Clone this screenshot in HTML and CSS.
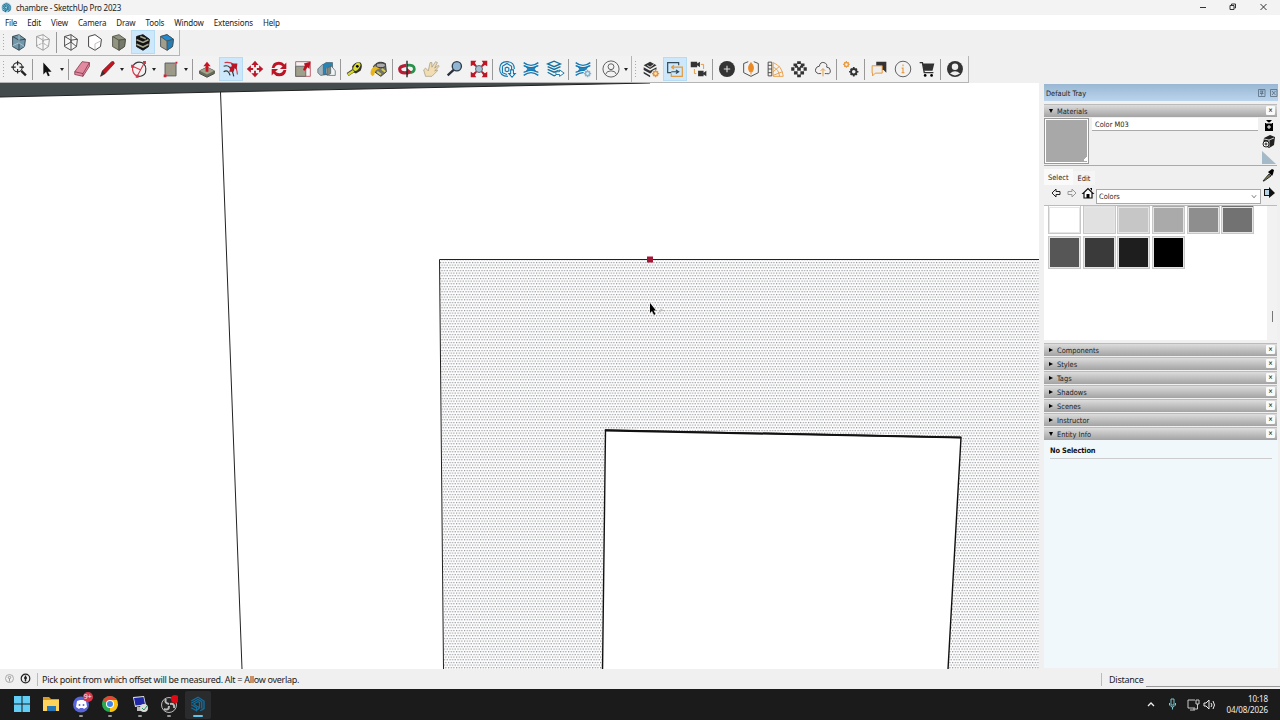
FILE: index.html
```
<!DOCTYPE html>
<html lang="en">
<head>
    <meta charset="UTF-8">
    <title>chambre - SketchUp Pro 2023</title>
    <link rel="stylesheet" href="styles.css">
</head>
<body>
    <svg width="0" height="0" class="defs">
        <defs>
            <g id="cube"><path d="M5 6l7-2 7 5-1 8-6 4-7-4z"/><path d="M5 6l7 4 7-1M12 10v11" fill="none"/></g>
            <g id="waves" fill="none" stroke="#1478b4" stroke-width="1.500"><path d="M4 5q8 6 16 0M4 8.500q3 0 5 3.500-2 3.500-5 3.500M20 8.500q-3 0-5 3.500 2 3.500 5 3.500M4 19q8-6 16 0M7 9.500q5 2 10 0M7 14.500q5-2 10 0"/><path d="M9 12h6" stroke-width="2"/></g>
            <g id="gear"><circle r="3.5" fill="none" stroke-width="2.4"/><path d="M0-6v2M0 4v2M-6 0h2M4 0h2M-4-4l1.3 1.3M4 4L2.7 2.7M-4 4l1.3-1.3M4-4L2.7-2.7" stroke-width="2.2"/></g>
            <g id="logo" fill="none" stroke-width="1.800"><path d="M3 8l9-5 8 5v10l-5 3M3 11l9-5 5 3v9M6 12l6-3 2 1v7M3 13l7 4v5M3 17l7 4M6 12l8 5-3 3"/></g>
        </defs>
    </svg>

    <header class="titlebar">
        <svg class="app-icon" viewBox="0 0 24 24"><circle cx="12" cy="12" r="11" fill="#9bd0e6"/><use href="#logo" stroke="#126487"/></svg>
        <span class="title">chambre - SketchUp Pro 2023</span>
        <svg class="window-buttons" viewBox="0 0 80 15" fill="none" stroke="#333" stroke-width="1">
            <path d="M0 7.500h6"/><path d="M30 5.500h4v4h-4zM31.500 5v-1h4v4h-1"/><path d="M60.500 4l6 6M66.500 4l-6 6"/>
        </svg>
    </header>

    <nav class="menu">
        <span>File</span><span>Edit</span><span>View</span><span>Camera</span><span>Draw</span><span>Tools</span><span>Window</span><span>Extensions</span><span>Help</span>
    </nav>

    <div class="toolbars">
        <div class="toolbar styles-bar">
            <i class="grip"></i>
            <svg class="tool" viewBox="0 0 24 24" stroke="#34434c"><use href="#cube" fill="#7197a9"/><path d="M5 16l7-3 6 4M12 4v9" stroke="#a9c8d5" fill="none"/></svg>
            <svg class="tool" viewBox="0 0 24 24" stroke="#999"><use href="#cube" fill="#f7f7f7"/><path d="M5 16l7-3 6 4M12 4v9" stroke-dasharray="2 1" fill="none"/></svg>
            <i class="sep"></i>
            <svg class="tool" viewBox="0 0 24 24" stroke="#444"><use href="#cube" fill="#f7f7f7"/><path d="M5 16l7-4 6 5M12 4v8" fill="none"/></svg>
            <svg class="tool" viewBox="0 0 24 24" stroke="#333"><path d="M5 6l7-2 7 5-1 8-6 4-7-4z" fill="#fff"/><path d="M12 20v-6l6-3" stroke="#bbb" fill="none"/></svg>
            <svg class="tool" viewBox="0 0 24 24" stroke="#535347"><use href="#cube" fill="#929482"/><path d="M12 10l7-1-1 8-6 4z" fill="#77796a"/></svg>
            <svg class="tool active" viewBox="0 0 24 24" stroke="#111"><path d="M5 6l7-2 7 5-1 8-6 4-7-4z" fill="#111"/><path d="M5 9.500l7 3 6-3M5 14.500l7 3 6-3M9 6l6 2.500" stroke="#a6a58e" stroke-width="1.700" fill="none"/></svg>
            <svg class="tool" viewBox="0 0 24 24" stroke="#45545c"><path d="M5 6l7-2 7 5-1 8-6 4-7-4z" fill="#a19f8c"/><path d="M5 6l7-2 7 5-7 2z" fill="#238bd0"/><path d="M12 11l7-2-1 8-6 4z" fill="#267eb5"/></svg>
        </div>
        <div class="toolrow">
            <div class="toolbar main-bar">
                <i class="grip"></i>
                <svg class="tool" viewBox="0 0 24 24" fill="none" stroke="#222" stroke-width="1.200"><circle cx="10.500" cy="10" r="5"/><path d="M10.500 3v5M10.500 12v5M3.500 10h5M12.500 10h5"/><path d="M14.500 14l5 5" stroke-width="2.500"/></svg>
                <i class="sep"></i>
                <svg class="tool" viewBox="0 0 24 24"><path d="M8 5v13l3-3 2 5 2-1-2-4h4z" fill="#111"/></svg><i class="drop"></i>
                <i class="sep"></i>
                <svg class="tool" viewBox="0 0 24 24" stroke="#7b2b42" stroke-width=".8"><path d="M3 15l8-11 8 1v4l-7 11-9-2z" fill="#e28ba0"/><path d="M3 15l9 2 7-12M12 17v3" fill="none"/></svg>
                <svg class="tool" viewBox="0 0 24 24"><path d="M5 20l2-6 10-10q3-1 3 2L10 17z" fill="#c4141f" stroke="#60161b" stroke-width=".7"/><path d="M5 20l2-6 3 3z" fill="#333"/></svg><i class="drop"></i>
                <svg class="tool" viewBox="0 0 24 24" fill="none" stroke="#d33a4a" stroke-width="1.200"><path d="M5 9q4-6 10-4 6 3 4 11-2 4-8 4" stroke="#333"/><path d="M5 9q-1 8 5 11M10 20L18 5M5 9l9 4"/><path d="M4 8h2v2H4zM17 4h2v2h-2zM9 19h2v2H9z" fill="#c9273a"/></svg><i class="drop"></i>
                <svg class="tool" viewBox="0 0 24 24"><path d="M5.500 5.500h12v14h-12z" fill="#9a9b89" stroke="#555"/><path d="M5 20L18 5" stroke="#d27d78"/><path d="M4 18h3v3H4zM17 4h2v2h-2z" fill="#c9273a"/></svg><i class="drop"></i>
                <i class="sep"></i>
                <svg class="tool" viewBox="0 0 24 24"><path d="M4 14l8-4 8 4v3l-8 4-8-4z" fill="#686b5c" stroke="#44473c"/><path d="M4 14l8-4 8 4-8 4z" fill="#a1a28c"/><path d="M10.500 15V9H8l4-5 4 5h-2.500v6z" fill="#cd1220"/></svg>
                <svg class="tool active" viewBox="0 0 24 24"><path d="M4 9q8-3 11 11M4 15q5-3 7 4" fill="none" stroke="#333" stroke-width="1.300"/><path d="M5 5q13-2 14 13" fill="none" stroke="#d33643" stroke-width="1.200"/><path d="M10 15l1-3-1-2 3-1-1-3 7 0-1 7-2-2-1 4z" fill="#b91526"/></svg>
                <svg class="tool" viewBox="0 0 24 24" fill="#bc1729"><path d="M12 3l4 4.500h-3V10H11V7.500H8zM12 21l-4-4.500h3V14h2v2.500h3zM3 12l4.500-4v3H10v2H7.500v3zM21 12l-4.500 4v-3H14v-2h2.500V8z"/></svg>
                <svg class="tool" viewBox="0 0 24 24" fill="#bd1425"><path d="M4 11q1-7 8-7 4 0 6 3l2-2v7h-7l3-3q-6-4-9 2zM20 13q-1 7-8 7-4 0-6-3l-2 2v-7h7l-3 3q6 4 9-2z"/></svg>
                <svg class="tool" viewBox="0 0 24 24"><path d="M4 4h16v16H4z" fill="none" stroke="#be5962"/><path d="M4 9h11v11H4z" fill="#9fa08c" stroke="#666"/><path d="M12 13l2-5-1-2 7-2-1 8-2-2-3 4z" fill="#bf1021"/></svg>
                <svg class="tool" viewBox="0 0 24 24" stroke="#4c626e" stroke-width=".8"><path d="M2 12l5-5h5v11l-7 1-3-3z" fill="#a2b3bc"/><path d="M8 7l3-2h7v10l-7 3H8z" fill="#2585b5"/><path d="M11 11l6-2 4 5v5h-7l-3-2z" fill="#f2f4f3"/><path d="M12 11l4-2v8l-4 2z" fill="#83877a"/></svg>
                <i class="sep"></i>
                <svg class="tool" viewBox="0 0 24 24"><path d="M9 9q4-6 9-4 3 3 0 9l-5 3-4-2z" fill="#33342d"/><ellipse cx="14" cy="9.500" rx="3" ry="5" transform="rotate(35 14 9.500)" fill="#d9dd28"/><path d="M4 18l6-4" stroke="#444" stroke-width="4"/><path d="M4.500 18l6-4" stroke="#dadb26" stroke-width="2.500"/><circle cx="14.500" cy="9" r="1.500"/></svg>
                <svg class="tool" viewBox="0 0 24 24"><path d="M6 9q5-7 13-3l1 9-6 5-7-5z" fill="#73756b" stroke="#333"/><ellipse cx="14" cy="8" rx="5" ry="2.500" fill="#aaa" stroke="#333"/><path d="M3 18q-1-7 5-9l5 3q-6 0-6 6l-2 2z" fill="#e9b61a"/><path d="M10 15l4 3M15 12l4 3" stroke="#d7ce58" stroke-width="2"/></svg>
                <i class="sep"></i>
                <svg class="tool" viewBox="0 0 24 24" fill="none"><path d="M12 8q8-1 8 4 0 4-6 4" stroke="#29914c" stroke-width="3"/><path d="M11 8q-7 1-7 4 0 5 8 4" stroke="#b81d36" stroke-width="3.500"/><path d="M12 11l5 4-5 4z" fill="#b81d36"/><path d="M12 3v18" stroke="#222" stroke-width="1.500"/></svg>
                <svg class="tool" viewBox="0 0 24 24"><path d="M6 20l-2-7 2-2 3 3 2-9h2v5l4-6 2 1-3 6 4-3 1 1-5 5 3-1v1l-6 6z" fill="#f2dcb2" stroke="#8c8065" stroke-width=".6"/></svg>
                <svg class="tool" viewBox="0 0 24 24"><circle cx="14" cy="9" r="5" fill="#91b6d3" stroke="#303b48" stroke-width="1.500"/><path d="M10.500 13L4 19" stroke="#28313d" stroke-width="2.500"/></svg>
                <svg class="tool" viewBox="0 0 24 24"><path d="M3 3h6L7.500 5.500 10 9 9 10 5.500 7.500 3 9zM21 3h-6l1.500 2.500L14 9l1 1 3.500-2.500L21 9zM3 21h6l-1.500-2.500L10 15l-1-1-3.500 2.500L3 15zM21 21h-6l1.500-2.500L14 15l1-1 3.500 2.500L21 15z" fill="#bd1726"/><circle cx="12" cy="12" r="3.800" fill="#a6c0d2" stroke="#4e5961"/></svg>
                <i class="sep"></i>
                <svg class="tool" viewBox="0 0 24 24" fill="none" stroke="#1475ae" stroke-width="1.200"><path d="M13 20q-9 0-9-8 0-8 8-8t8 8M7 9l5-3 5 3v5M7 9v7l5 2M10 11l2-1 2 1v3l-2 1-2-1z"/><path d="M16 13h3v4h2l-3.500 4-3.500-4h2z" fill="#fff"/></svg>
                <svg class="tool" viewBox="0 0 24 24"><use href="#waves"/></svg>
                <svg class="tool" viewBox="0 0 24 24" fill="none" stroke="#14709e" stroke-width="1.400"><path d="M4 6.500l7-3 7 3-7 3zM4 9.500l7 3 7-3M4 12.500l7 3 5-2M4 15.500l7 4 2-1"/><path d="M13 15h4v-2l5 3.500-5 3.500v-2h-4z" fill="#fff" stroke-width="1"/></svg>
                <i class="sep"></i>
                <svg class="tool" viewBox="0 0 24 24"><use href="#waves"/><circle cx="17" cy="17" r="4.500" fill="#eee"/><use href="#gear" transform="translate(17 17) scale(.65)" stroke="#81b3d2"/></svg>
                <i class="sep"></i>
                <svg class="tool" viewBox="0 0 24 24" fill="none" stroke="#555"><circle cx="12" cy="12" r="8.800"/><circle cx="12" cy="9.500" r="3.200"/><path d="M6 18q1-4 6-4t6 4"/></svg><i class="drop"></i>
            </div>
            <div class="toolbar render-bar">
                <i class="grip"></i>
                <svg class="tool" viewBox="0 0 24 24"><path d="M4 8l7-4 7 4-7 4zM4 10l7 4 7-4v3l-7 4-7-4zM4 15l7 4v2l-7-4z" fill="#333"/><path d="M8 8l3 2 4-3" fill="none" stroke="#eee"/><circle cx="17" cy="17" r="4.500" fill="#eee"/><use href="#gear" transform="translate(17 17) scale(.65)" stroke="#ed942f"/></svg>
                <svg class="tool active" viewBox="0 0 24 24" fill="none" stroke="#334b59" stroke-width="1.300"><path d="M8 16H4V5h12v3"/><path d="M8 10h12v10H8v-3M8 10l3-2M8 10l3 2" stroke="#e19a43"/><path d="M8 15h8M13 13l3 2-3 2"/></svg>
                <svg class="tool" viewBox="0 0 24 24" fill="#333"><path d="M3 4h7v2l3-2v6l-3-2v2H3zM11 14h6v2l3-2v6l-3-2v2h-6z"/><path d="M14 7h3v5M9 17H7v-5" fill="none" stroke="#e79533"/></svg>
                <i class="sep"></i>
                <svg class="tool" viewBox="0 0 24 24"><circle cx="12" cy="12" r="8.700" fill="#333"/><path d="M12 8.500v7M8.500 12h7" stroke="#ddd" stroke-width="1.200"/></svg>
                <svg class="tool" viewBox="0 0 24 24" fill="none" stroke="#444"><path d="M9 4L4 6v10l8 4 8-4V6l-5-2"/><path d="M10.500 15q-3-5 1.500-10 4.500 5 1.500 10zM12 15v3" fill="#e98a26" stroke="#e98a26"/></svg>
                <svg class="tool" viewBox="0 0 24 24" fill="none" stroke="#444"><path d="M4.500 4.500h4v15h-4zM4.500 8h4M4.500 12h4M4.500 16h4"/><path d="M10 5q10 4 11 15H10zM10 10q6 2 7 10M10 15l7-6M10 19l10-4" stroke="#e99d43"/></svg>
                <svg class="tool" viewBox="0 0 24 24" fill="#333"><path d="M10 3.500h4v3h-4zM6 6h4v3H6zM14 6h4v3h-4zM3.500 10h3.500v4H3.500zM10 10h4v4h-4zM17 10h3.500v4H17zM6.500 14.500h4v3.500h-4zM13.500 14.500h4v3.500h-4zM10 18h4v3h-4zM7.500 8.500H11v2H7.500zM13 8.500h3.500v2H13z"/></svg>
                <svg class="tool" viewBox="0 0 24 24" fill="none" stroke="#444"><path d="M10 17H7q-4-1-3-5 1-3 4-3 1-5 5-4 4 1 3 5 4 0 4 4t-4 3h-2"/><path d="M12 20v-8M9.500 14L12 11.500 14.500 14" stroke="#e29338"/></svg>
                <i class="sep"></i>
                <svg class="tool" viewBox="0 0 24 24"><use href="#gear" transform="translate(7 7) scale(.6)" stroke="#e99c42"/><use href="#gear" transform="translate(15 15) scale(.85)" stroke="#333"/></svg>
                <i class="sep"></i>
                <svg class="tool" viewBox="0 0 24 24"><path d="M9 4h11v12l-3-3H9z" fill="#333"/><path d="M4.500 8.500h11v8H8l-3 3v-3h-.5z" fill="#eee" stroke="#e7912f"/></svg>
                <svg class="tool" viewBox="0 0 24 24"><circle cx="12" cy="12" r="8.500" fill="none" stroke="#555"/><path d="M12 7v2M10.500 11H12v5M10.500 16h3" stroke="#e99b41" stroke-width="1.300" fill="none"/></svg>
                <svg class="tool" viewBox="0 0 24 24"><path d="M4 5h3l2 11h10" fill="none" stroke="#333" stroke-width="1.500"/><path d="M7 6h13l-2 8H9z" fill="#333"/><circle cx="10" cy="19" r="1.500"/><circle cx="17" cy="19" r="1.500"/></svg>
                <i class="sep"></i>
                <svg class="tool" viewBox="0 0 24 24"><circle cx="12" cy="12" r="8.700" fill="#333"/><circle cx="12" cy="9.500" r="3.500" fill="#eee"/><path d="M6.500 17q5.500-5 11 0-5.500 4-11 0z" fill="#eee"/></svg>
            </div>
        </div>
    </div>

    <main class="workspace">
        <svg class="viewport" viewBox="0 83 1040 586">
            <defs>
                <pattern id="dots" x="440" y="261" width="2.667" height="5.333" patternUnits="userSpaceOnUse">
                    <path d="M0 1h1.200v1H0zM1.333 3.667h1.200v1h-1.200z" fill="#62666e"/>
                </pattern>
            </defs>
            <rect y="83" width="1039" height="586" fill="#fff"/>
            <path d="M0 83v14l220-5 430-9z" fill="#434b4d"/>
            <path d="M0 97l220-5 430-9M220.500 92L242 669" fill="none" stroke="#222"/>
            <path d="M440 260h599v409H444z" fill="url(#dots)"/>
            <path d="M1039 259.500H439.500L443.500 669" fill="none" stroke="#222"/>
            <path d="M605.500 430L961 437.500 947.800 673H602.500z" fill="#fff" stroke="#111" stroke-width="1.400"/>
            <path d="M605 430.500L961 437.500" stroke="#111" stroke-width="2"/>
            <path d="M647 256.500h6v6h-6z" fill="#a51735"/>
            <path d="M658 313l4-3 3 1M659 311l3-2" fill="none" stroke="#bbb"/>
            <path d="M650 303v10l2-2 2 4 1.500-1-2-3.500h2.500z" fill="#000"/>
        </svg>

        <aside class="tray">
            <div class="tray-title">Default Tray
                <svg viewBox="0 0 20 8" fill="none" stroke="#596c7d" stroke-width=".8"><path d="M.5.500h6.500v7H.5zM2 2h3.500M3 2v2.500M4.500 2v2.500M2 4.500h3.500M3.700 4.500v2M12.500.5H19v7h-6.500zM14 2l3.500 4M17.500 2L14 6"/></svg>
            </div>
            <div class="panel-head open">Materials<b>×</b></div>
            <section class="materials">
                <div class="material-info">
                    <div class="preview"></div>
                    <div class="material-name">Color M03</div>
                    <svg class="material-tools" viewBox="0 0 16 48"><path d="M4 5h8v8H4zM5 2h6L8 5z"/><path d="M5 5h6M8 7v4M6 9h4" stroke="#fff"/><path d="M3 20l6-3 5 2-1 8-5 3-6-3z" fill="#222"/><path d="M3 21l5 1 5-2M8 22v7" stroke="#ccc" fill="none"/><circle cx="5" cy="26" r="3" fill="#fff" stroke="#222"/><path d="M3.500 26h3M5 24.500v3" stroke="#222"/><path d="M1 33l14 13H1z" fill="#a4bac8"/></svg>
                </div>
                <div class="tabs"><span class="tab selected">Select</span><span class="tab">Edit</span>
                    <svg viewBox="0 0 14 14"><path d="M2 13l6-7 2 2-7 5z" fill="#777a55" stroke="#333"/><path d="M7 4l4 4 1-2 1-4-2-1z"/></svg>
                </div>
                <div class="library">
                    <svg class="nav-icons" viewBox="0 0 48 16"><path d="M4 8l4-4v2.500h4v3H8V12z" fill="none" stroke="#222"/><path d="M28 8l-4-4v2.500h-4v3h4V12z" fill="none" stroke="#999"/><path d="M35 8.500l5-5 5 5h-1v4.500h-8V8.500z" fill="#fff" stroke="#111" stroke-width="1.200"/><path d="M38.500 9h3v4h-3zM42 3h2v3z"/></svg>
                    <div class="select">Colors<svg viewBox="0 0 7 5"><path d="M1 1l2.500 3L6 1" fill="none" stroke="#555" stroke-width=".9"/></svg></div>
                    <svg class="details" viewBox="0 0 16 16"><path d="M3 4h5V2l6 6-6 5v-2H3z" fill="#111"/><path d="M4 5h4v5H4z" fill="#b7d5e7"/></svg>
                </div>
                <div class="swatches">
                    <div class="grid">
                        <i class="white"></i><i class="m01"></i><i class="m02"></i><i class="m03"></i><i class="m04"></i><i class="m05"></i>
                        <i class="m06"></i><i class="m07"></i><i class="m08"></i><i class="black"></i>
                    </div>
                    <div class="scroll"><i></i></div>
                </div>
            </section>
            <div class="panel-head">Components<b>×</b></div>
            <div class="panel-head">Styles<b>×</b></div>
            <div class="panel-head">Tags<b>×</b></div>
            <div class="panel-head">Shadows<b>×</b></div>
            <div class="panel-head">Scenes<b>×</b></div>
            <div class="panel-head">Instructor<b>×</b></div>
            <div class="panel-head open">Entity Info<b>×</b></div>
            <section class="entity"><p>No Selection</p></section>
        </aside>
    </main>

    <footer class="status">
        <svg viewBox="0 0 32 12" fill="none"><circle cx="5.500" cy="5.500" r="4" stroke="#aaa"/><circle cx="5.500" cy="4.500" r="1.200" stroke="#999"/><path d="M5.500 5.500v3" stroke="#999"/><circle cx="21.500" cy="5.500" r="4.300" stroke="#222" stroke-width="1.200"/><path d="M21.500 2.500v6M20 5h3" stroke="#222" stroke-width="1.500"/></svg>
        <span class="hint">Pick point from which offset will be measured. Alt = Allow overlap.</span>
        <span class="distance">Distance</span>
        <span class="measure"></span>
    </footer>

    <footer class="taskbar">
        <div class="apps">
            <span class="app"><svg viewBox="0 0 18 18" fill="#62cdf5"><path d="M1 1h7.500v7.500H1zM9.500 1H17v7.500H9.500zM1 9.500h7.500V17H1zM9.500 9.500H17V17H9.500z"/></svg></span>
            <span class="app"><svg viewBox="0 0 18 18"><path d="M1 2h6l2 2h8v12H1z" fill="#d99c26"/><path d="M1 5h16v11H1z" fill="#ffd45d"/><path d="M5 11h9v5H5z" fill="#2478b9"/></svg></span>
            <span class="app run"><svg viewBox="0 0 18 18"><circle cx="9" cy="9.500" r="8" fill="#5865d8"/><path d="M5 6l3-1h3l3 1 1 6-3 2-1-1H8l-1 1-3-2z" fill="#fff"/><circle cx="7.500" cy="10" r="1" fill="#5865d8"/><circle cx="11.500" cy="10" r="1" fill="#5865d8"/></svg><em>9+</em></span>
            <span class="app run"><svg viewBox="0 0 18 18"><circle cx="9" cy="9" r="8" fill="#2aa84f"/><path d="M9 9L2 5q7-8 14 0v4z" fill="#e94335"/><path d="M9 9h8q-1 8-8 8z" fill="#fbc116"/><path d="M9 5h7q3 9-7 12l3-6z" fill="#fbc116"/><circle cx="9" cy="9" r="4" fill="#fff"/><circle cx="9" cy="9" r="3" fill="#4285e8"/></svg></span>
            <span class="app run"><svg viewBox="0 0 18 18"><path d="M2 2l11-1 2 9-11 2z" fill="#e1e7ee"/><path d="M3 3l9.500-1 1.500 7.500-9.500 1z" fill="#2028a6"/><path d="M6 12h5v4H6z" fill="#bbb"/><circle cx="13" cy="13" r="4" fill="#ddd"/><path d="M11 13l2 2 3-4" fill="none" stroke="#27925b"/></svg></span>
            <span class="app run"><svg viewBox="0 0 18 18" fill="none" stroke="#bbb"><circle cx="9" cy="10" r="7.500" fill="#242424"/><path d="M9 9q-5-1-3-5M10 9q5-1 4 4M9 11q0 5-5 3" stroke-width="2"/><circle cx="15" cy="4" r="4" fill="#e00913" stroke="none"/></svg></span>
            <span class="app current"><svg viewBox="0 0 24 24"><use href="#logo" stroke="#126d9e"/></svg></span>
        </div>
        <svg class="system-icons" viewBox="0 0 70 16" fill="none" stroke="#eee"><path d="M1 9l3-3 3 3" stroke-width="1.300"/><path d="M24 2h3v6h-3zM22.500 6v2q3 4 6 0V6M25.500 10v2.500" stroke="#75c8cf"/><path d="M48 3h-7v8h7M43 13h5M49 3h3v4h-3zM50.500 7v5H46" stroke="#ccc"/><path d="M57 6h2l3-3v9l-3-3h-2zM64 6q2 2 0 4M66 4q3 4 0 8"/></svg>
        <div class="clock">10:18<br>04/08/2026</div>
    </footer>
</body>
</html>
```
FILE: styles.css
```
* {
    box-sizing: border-box;
}
body {
    margin: 0;
    width: 1280px;
    height: 720px;
    overflow: hidden;
    display: flex;
    flex-direction: column;
    font-family: "Noto Sans", "Open Sans", sans-serif;
    font-size: 8px;
    color: #222;
    background: #f0f0f0;
}
.defs {
    position: absolute;
}
svg {
    display: block;
    flex: none;
}
.titlebar {
    height: 15px;
    display: flex;
    align-items: center;
    background: #f3f3f3;
    padding-left: 1px;
}
.app-icon {
    width: 11px;
    height: 11px;
    margin-right: 4px;
}
.title {
    flex: 1;
    letter-spacing: -0.22px;
}
.window-buttons {
    width: 80px;
    height: 15px;
}
.menu {
    height: 15px;
    display: flex;
    align-items: center;
    gap: 10px;
    padding-left: 5px;
    background: #fff;
    letter-spacing: -0.14px;
}
.toolbars {
    height: 53px;
}
.toolbar {
    display: flex;
    align-items: center;
    border-right: 1px solid #b5b5b5;
    border-bottom: 1px solid #b5b5b5;
    background: #f2f2f2;
}
.styles-bar {
    width: 180px;
    height: 26px;
    padding-bottom: 1px;
}
.toolrow {
    display: flex;
    height: 27px;
}
.main-bar {
    width: 632px;
}
.render-bar {
    width: 337px;
}
.grip {
    width: 7px;
    height: 19px;
    flex: none;
    background: radial-gradient(circle, #aaa 0.6px, transparent 0.8px) 1px 0 / 5px 3px repeat-y;
}
.tool {
    width: 24px;
    height: 24px;
    padding: 1px;
}
.active {
    background: #cce8fa;
    border: 1px solid #b6dcf4;
    padding: 0;
}
.sep {
    width: 4px;
    height: 21px;
    flex: none;
    border-left: 1px solid #999;
    margin-left: 1px;
    margin-right: -1px;
}
.drop {
    width: 8px;
    flex: none;
    display: flex;
    padding-left: 1px;
}
.drop::after {
    content: "";
    border: 2px solid transparent;
    border-top: 3px solid #222;
    border-bottom: 0;
}
.workspace {
    height: 586px;
    display: flex;
}
.viewport {
    width: 1040px;
    height: 586px;
}
.tray {
    width: 240px;
    display: flex;
    flex-direction: column;
    padding: 1px 2px 1px 4px;
    font-family: "DejaVu Sans Condensed", "DejaVu Sans", sans-serif;
    font-stretch: condensed;
    font-size: 7.4px;
    letter-spacing: 0;
}
.tray-title {
    height: 17px;
    display: flex;
    flex: none;
    align-items: center;
    justify-content: space-between;
    padding: 1px 0 0 2px;
    background: linear-gradient(#99b7d3, #bad4ed);
    margin-bottom: 3px;
}
.tray-title svg {
    width: 20px;
    height: 8px;
    margin-top: -1px;
}
.panel-head {
    height: 13px;
    flex: none;
    margin: 0 1px 1px 0;
    display: flex;
    align-items: center;
    padding: 0 2px 0 4px;
    background: linear-gradient(#dcdcdc, #a3a3a3);
    border-top: 1px solid #bbb;
}
.panel-head::before {
    content: "";
    border: 2px solid transparent;
    border-left: 4px solid #000;
    border-right: 0;
    margin: 0 4px 1px 1px;
}
.panel-head.open::before {
    border: 2px solid transparent;
    border-top: 4px solid #000;
    border-bottom: 0;
}
.panel-head b {
    width: 9px;
    height: 9px;
    margin: -1px 0 0 auto;
    border-radius: 1px;
    background: #fafafa;
    font-size: 6px;
    line-height: 8px;
    text-align: center;
    letter-spacing: 0;
}
.materials {
    height: 225px;
    flex: none;
    padding-right: 1px;
}
.material-info {
    height: 48px;
    display: flex;
    border-bottom: 1px solid #aaa;
}
.preview {
    width: 45px;
    height: 46px;
    border: 1px solid #999;
    outline: 1px solid #fff;
    outline-offset: -2px;
    background: linear-gradient(135deg, transparent 50%, #fff 50%) 38px 38px / 4px 4px no-repeat #a8a8a8;
}
.material-name {
    flex: 1;
    height: 13px;
    margin: 0 3px;
    padding: 2px 3px;
    background: #fff;
    border-bottom: 1px solid #aaa;
}
.material-tools {
    width: 16px;
    height: 48px;
}
.tabs {
    height: 19px;
    display: flex;
    align-items: flex-end;
}
.tab {
    padding: 3px 5px;
    height: 14px;
    background: #f5f5f5;
}
.tab.selected {
    height: 16px;
    padding: 4px 4px;
    background: #fafafa;
}
.tabs svg {
    width: 14px;
    height: 14px;
    margin: 0 2px 3px auto;
}
.library {
    height: 20px;
    display: flex;
    align-items: center;
}
.nav-icons {
    width: 48px;
    height: 16px;
    margin: 0 0 4px 4px;
}
.select {
    width: 165px;
    height: 15px;
    margin-top: 3px;
    padding: 0 3px 0 2px;
    display: flex;
    align-items: center;
    justify-content: space-between;
    background: #fff;
    border: 1px solid #aaa;
}
.select svg {
    width: 6px;
    height: 5px;
}
.details {
    width: 16px;
    height: 16px;
    margin-bottom: 4px;
}
.swatches {
    height: 135px;
    display: flex;
    border-top: 1px solid #bbb;
    background: #fff;
}
.grid {
    width: 223px;
    display: grid;
    grid-template-columns: repeat(6, 33px);
    grid-template-rows: 28px 33px;
    gap: 2px 1.7px;
    padding-left: 4px;
}
.grid i {
    border: 1px solid #c8c8c8;
    outline: 1px solid #e5e5e5;
    outline-offset: -2px;
}
.grid i:nth-child(-n+6) {
    border-top: 0;
}
.white { background: #fff; }
.m01 { background: #e1e1e1; }
.m02 { background: #c6c6c6; }
.m03 { background: #aaa; }
.m04 { background: #8e8e8e; }
.m05 { background: #727272; }
.m06 { background: #565656; }
.m07 { background: #3a3a3a; }
.m08 { background: #1e1e1e; }
.black { background: #000; }
.scroll {
    flex: 1;
    display: flex;
    justify-content: center;
    background: #f2f2f2;
    padding-top: 105px;
}
.scroll i {
    width: 1px;
    height: 11px;
    background: #777;
}
.entity {
    flex: 1;
    margin-top: -1px;
    padding: 4px 6px;
    background: #f0f8fc;
}
.entity p {
    margin: 0;
    height: 15px;
    line-height: 14px;
    font-weight: bold;
    letter-spacing: -0.15px;
    border-bottom: 1px solid #ccc;
    color: #111;
}
.status {
    height: 20px;
    display: flex;
    align-items: center;
    padding-left: 4px;
    font-size: 9px;
}
.status svg {
    width: 32px;
    height: 12px;
}
.hint {
    width: 1064px;
    height: 13px;
    padding-left: 4px;
    line-height: 13px;
    border-left: 1px solid #bbb;
    letter-spacing: -0.3px;
    margin-left: 1px;
}
.distance {
    width: 45px;
    height: 13px;
    line-height: 13px;
    padding-left: 7px;
    border-left: 1px solid #bbb;
    letter-spacing: -0.25px;
}
.measure {
    flex: 1;
    height: 15px;
    border-bottom: 1px solid #999;
}
.taskbar {
    height: 31px;
    display: flex;
    align-items: center;
    background: #1b1b1b;
    color: #eee;
}
.apps {
    display: flex;
    flex: 1;
    gap: 3.4px;
    padding-left: 9px;
}
.app {
    position: relative;
    width: 26px;
    height: 28px;
    display: flex;
    justify-content: center;
    padding-top: 4px;
    border-radius: 2px;
}
.app svg {
    width: 18px;
    height: 18px;
}
.run::after, .current::after {
    content: "";
    position: absolute;
    bottom: 2px;
    left: 11px;
    width: 4px;
    height: 2px;
    border-radius: 1px;
    background: #999;
}
.current {
    background: #292b2c;
}
.current::after {
    left: 8px;
    width: 10px;
    background: #62c2e7;
}
.app em {
    position: absolute;
    top: 1px;
    right: 1px;
    width: 10px;
    height: 10px;
    border-radius: 5px;
    background: #d9364c;
    font: 7px/9px "Noto Sans", sans-serif;
    text-align: center;
}
.system-icons {
    width: 70px;
    height: 16px;
    margin-right: 6px;
}
.clock {
    width: 57px;
    padding-right: 12px;
    text-align: right;
    line-height: 10.5px;
    letter-spacing: -0.1px;
}
```
